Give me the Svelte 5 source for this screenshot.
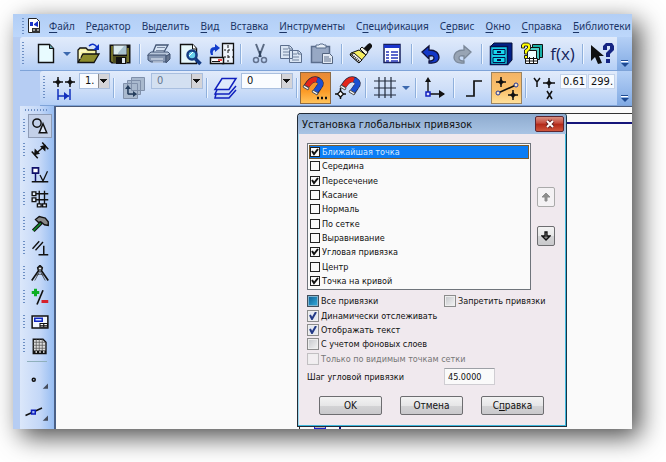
<script lang="ts">
  type Tool = { icon?: string; label?: string; kind?: string };

  const menu = [
    ['', 'Ф', 'айл'], ['', 'Р', 'едактор'], ['В', 'ы', 'делить'], ['', 'В', 'ид'],
    ['Вст', 'а', 'вка'], ['', 'И', 'нструменты'], ['С', 'п', 'ецификация'], ['С', 'е', 'рвис'],
    ['', 'О', 'кно'], ['', 'С', 'правка'], ['', 'Б', 'иблиотеки'],
  ];

  // Icon bodies, all on a 24x24 grid
  const icons: Record<string, string> = {
    new: `<path d="M4.5 2.5h11l4 4v14h-15z" fill="#e8fbff" stroke="#111" stroke-width="1.4"/><path d="M15.5 2.5v4h4" fill="#5fa0a8" stroke="#111"/>`,
    open: `<path d="M1 20V8l2-2h6l2 2h8v4" fill="#f4f0a0" stroke="#111" stroke-width="1.3"/><path d="M1 20.500 6 12h16l-5 8.500z" fill="#8d8c2d" stroke="#111" stroke-width="1.300"/><path d="M3 17V9h6" fill="none" stroke="#fffde0"/><path d="M12 4q4-4 8 1" fill="none" stroke="#0b2fc5" stroke-width="1.500"/><path d="M22 2v6h-6z" fill="#0b2fc5"/>`,
    save: `<path d="M1.500 2.500h21v19h-19l-2-2z" fill="#111"/><path d="M3 4h2v16H4l-1-1zM19 6h2v14h-2z" fill="#72712b"/><path d="M5.500 3.500h13v9h-13z" fill="#dcecf0"/><path d="m10 11 6-7h2v8h-8z" fill="#a7c1ce"/><path d="M5 14h14v7H5z" fill="#4f4e20"/><path d="M8 15h10v7H8z" fill="#111"/><path d="M14 16h3v5h-3z" fill="#dfe7ed"/>`,
    print: `<path d="M6 10 9 3h12l-4 7" fill="#d7e4f4" stroke="#435574" stroke-width="1.300"/><path d="M10 5.500h8m-9 3h8" stroke="#7c8ba5"/><path d="M1 12.500 4 10h17l2 2-3 2H1z" fill="#b7c5da" stroke="#435574"/><path d="M1 13h18v7H4l-3-2z" fill="#8797b2" stroke="#435574"/><path d="m19 14 4-2v5l-4 4z" fill="#66748d" stroke="#435574"/><path d="M4 17h12M6 20h10" stroke="#e9f0fb"/>`,
    preview: `<path d="M2.500 2.500h12l4 4v15h-16z" fill="#e6f7fa" stroke="#111" stroke-width="1.400"/><path d="M14.500 2v5h4" fill="#fff" stroke="#111"/><circle cx="14" cy="13" r="4.500" fill="#69d1eb" stroke="#173d83" stroke-width="2.500"/><path d="m17.500 17 5 5" stroke="#123881" stroke-width="3.500"/><path d="m11 14 4-4" stroke="#fff"/>`,
    exchange: `<path d="M13.500 1.500h11v20h-11z" fill="#eef4fc" stroke="#111" stroke-width="1.300"/><path d="M19 3v17" stroke="#111" stroke-dasharray="3 2"/><path d="M15 8h9m-9 7h9" stroke="#111" stroke-dasharray="2 2"/><path d="M1.500 15.500h13v6h-13z" fill="#fff" stroke="#111" stroke-width="1.500"/><path d="M3 19.500h8" stroke="#111"/><path d="M9 18h4" stroke="#e11" stroke-width="1.500"/><path d="M2 13q-3-8 4-8V2l5 4-5 4V8q-3 0-2 5z" fill="#123dcc"/>`,
    cut: `<path d="m8 2 5 13m3-13-5 13" stroke="#5b6b83" stroke-width="2"/><circle cx="8" cy="18" r="2.500" fill="none" stroke="#62728f" stroke-width="1.500"/><circle cx="16" cy="18" r="2.500" fill="none" stroke="#62728f" stroke-width="1.500"/><path d="M12 9v6" stroke="#30445f" stroke-width="2"/>`,
    copy: `<path d="M1.500 3.500h9l3 3v10h-12zM10.500 8.500h9l3 3v9h-12z" fill="#dae5f3" stroke="#5b6e8d"/><path d="M4 7h5m-5 3h6m-6 3h6m3-1h5m-5 3h7m-7 3h7" stroke="#71839f"/><path d="M10 4v3h3m6 2v3h3" fill="none" stroke="#5b6e8d"/>`,
    paste: `<path d="M1.500 4.500h18v16h-18z" fill="#97a8c4" stroke="#5b6e8d" stroke-width="1.500"/><path d="M6 6V3h3l1-1h3l1 1h2v3z" fill="#e5edf6" stroke="#5b6e8d"/><path d="M12.500 11.500h7l3 3v7h-10z" fill="#e3eaf4" stroke="#53647f"/><path d="M14 15h5m-5 2h7m-7 2h7" stroke="#60728f"/>`,
    brush: `<path d="m14 7 5-5 2-1 2 2v2l-5 6z" fill="#111"/><path d="m11 7 2-2 6 5-2 3z" fill="#f4f4e2" stroke="#111"/><path d="M10 8 2 11l-1 2 9 8 7-8z" fill="#f6ee5e" stroke="#111"/><path d="m1 13 9 8 3-3-8-7z" fill="#eee" stroke="#111"/><path d="m3 13 8 7" stroke="#111" stroke-width="2" stroke-dasharray="1 1"/>`,
    spec: `<path d="M4 2.500h16v18H4z" fill="#fff" stroke="#17205e" stroke-width="1.500"/><path d="M4 3h16v3H4z" fill="#1b35cc"/><path d="M6 10h3m-3 3h3m-3 3h3m-3 3h3m2-9h7m-7 3h7m-7 3h7m-7 3h7" stroke="#2937ba" stroke-width="1.500"/>`,
    undo: `<path d="m3 10 7-6v4q10 0 10 8-1 6-10 5v-2q5 0 5-3t-5-2v3z" fill="#1238c8" stroke="#10123a" stroke-width="1.300"/>`,
    redo: `<path d="m21 10-7-6v4Q4 8 4 16q1 6 10 5v-2q-5 0-5-3t5-2v3z" fill="#98a4b4" stroke="#7a8798" stroke-width="1.300"/>`,
    cabinet: `<path d="M1.500 4.500 5 1h18v17l-4 4.500z" fill="#002087" stroke="#071038"/><path d="M1.500 4.500h17v18h-17z" fill="#19cce5" stroke="#06104b" stroke-width="1.500"/><path d="M4 7.500h12v5H4zm0 8h12v5H4z" fill="#17d8ed" stroke="#05104b"/><path d="M8 10h4m-4 8h4" stroke="#05104b" stroke-width="2"/>`,
    libhelp: `<path d="M12.500 2.500h10v13h-10z" fill="#19b0a7" stroke="#111"/><path d="M9.500 5.500h10v12h-10z" fill="#4fd0c8" stroke="#111"/><path d="M7.500 8.500h9v9h-9z" fill="#eff" stroke="#111"/><path d="M5.500 16.500h12v5h-12zM9.500 15v6m4-6v6m-8-2h12" fill="#fff" stroke="#111"/><path d="M1.500 6V3l2-2h5l2 2v4l-3 3v2h-3V8l3-2V4h-3v2zM4.500 13.500h3v3h-3z" fill="#ff0" stroke="#222"/>`,
    cursor: `<path d="M1 3v16l4-4 3 7 4-1-3-7h5z" fill="#111"/><path d="M13 8V4l3-3h6l2 3v4l-4 4v3h-4v-4l4-4V4h-3v4zM16 17h4v4h-4z" fill="#152483"/>`,
    step: `<path d="M1 6h10M6 1v10m7-5h10M18 1v10" stroke="#111" stroke-width="1.500"/><path d="m6 3 3 3-3 3-3-3zm12 0 3 3-3 3-3-3z" fill="#111"/><path d="M6 13v11m12-11v11M6 20h11" stroke="#1230bd" stroke-width="1.500"/><path d="m12 16 5 4-5 4z" fill="#1230bd"/>`,
    sheets: `<path d="M9.500 1.500h13v13h-13zM5.500 4.500h13v14h-13zM1.500 7.500h14v15h-14z" fill="#a9b9ce" stroke="#8090aa"/><path d="M6 18v-6m0 6h6" stroke="#253d5c" stroke-width="1.500"/><path d="m3 13 3-4 3 4zm8 2 4 3-4 3z" fill="#253d5c"/>`,
    layers: `<path d="m2 18-1 4h14l7-8m-19 0-2 4h14l7-8" fill="none" stroke="#1020bd" stroke-width="1.500"/><path d="M8 2.500h14l-7 11H1z" fill="#dfeafc" stroke="#1020bd" stroke-width="1.500"/>`,
    magnet: `<g fill="none" stroke-width="6"><path d="M2 11Q8 1 14 4q5 3 1 7l-4 6" stroke="#26263f"/><path d="M3 10Q8 2 13 4" stroke="#e3261a" stroke-width="5"/><path d="M13 4q6 2 2 7l-4 5" stroke="#1b4fd0" stroke-width="5"/></g><path d="m0 9 5 3-1 2-5-3zm9 5 5 3-1 2-5-3z" fill="#eee" stroke="#555"/>`,
    dots: `<path d="M13 22h2m2 0h2m2 0h2" stroke="#111" stroke-width="2.500"/>`,
    pointmark: `<path d="M0 18h11M5.500 12v11" stroke="#111" stroke-width="1.500"/><path d="m5.500 15 3 3-3 3-3-3z" fill="#fff" stroke="#111" stroke-width="1.300"/>`,
    grid: `<path d="M1 5h22M1 12h22M1 19h22M6 1v21m6-21v21m6-21v21" stroke="#222b3d" stroke-width="1.200"/>`,
    axes: `<path d="M5 18V4m0 14h16" stroke="#111" stroke-width="1.400"/><path d="m2 6 3-5 3 5zm14 8 6 4-6 4z" fill="#111"/><path d="M3 16h4v4H3z" fill="#ddf" stroke="#1020c0" stroke-width="1.500"/>`,
    ortho: `<path d="M4 20h8V5h8" fill="none" stroke="#111" stroke-width="1.700"/>`,
    snap: `<path d="m3 17 18-8" stroke="#111" stroke-width="1.500"/><path d="M1 6h10M6 1v10m7 8h10m-5-5v10" stroke="#111" stroke-width="1.500"/><path d="m6 3 3 3-3 3-3-3zm12 13 3 3-3 3-3-3z" fill="#111"/><circle cx="3" cy="17" r="2" fill="#ffe7bc" stroke="#21369c"/><circle cx="21" cy="9" r="2" fill="#ffe7bc" stroke="#21369c"/>`,
    xy: `<path d="m1 2 3 4 3-4M4 6v5M10 7h12M16 2v10M14 15l5 8m0-8-5 8" fill="none" stroke="#111" stroke-width="1.500"/><path d="m16 4 3 3-3 3-3-3z" fill="#111"/>`,
    geometry: `<circle cx="8" cy="8" r="5.500" fill="none" stroke="#111" stroke-width="2"/><path d="m16 9 5 12H11z" fill="#dce7f8" stroke="#111" stroke-width="2"/>`,
    dimension: `<path d="m5 18 14-12" stroke="#111" stroke-width="2"/><path d="m4 19 1-9 7 7zM20 5l-1 9-7-7z" fill="#111"/><path d="m1 14 8 9m6-21 8 9" stroke="#111" stroke-width="2"/>`,
    symbols: `<path d="M2 2.500h8v7H2z" fill="#fff" stroke="#10106a" stroke-width="2.200"/><path d="M6 10v11" stroke="#10106a" stroke-width="2"/><path d="M1 21h22" stroke="#111" stroke-width="2"/><path d="m12 12 4 8 6-13" fill="none" stroke="#111" stroke-width="1.700"/>`,
    construct: `<path d="M6 5h17M6 13h17M11 1v18m7-18v18" stroke="#111" stroke-width="1.800"/><path d="M1.500 2.500h5v5h-5zm0 8h5v5h-5zm7 8h5v4h-5zm7 0h5v4h-5z" fill="#e5eef9" stroke="#111" stroke-width="1.800"/>`,
    hammer: `<path d="M14 10 3 21" stroke="#111" stroke-width="5"/><path d="M13 11 3 21" stroke="#12962c" stroke-width="2"/><path d="m6 6 5-4 8 2 4 5v5l-5-1-5-4-3 1z" fill="#888" stroke="#111" stroke-width="1.800"/>`,
    parallel: `<path d="M2 13 11 3M6 15l10-11" stroke="#111" stroke-width="1.800"/><path d="M17 9v12m-7 0h13" stroke="#111" stroke-width="2"/>`,
    compass: `<path d="m12 2 3 3-1 4 9 13M12 2 9 5l1 4L1 22" fill="none" stroke="#111" stroke-width="2.200"/><path d="m12 9 7 13M12 9 5 22M6 15q6-3 12 0" fill="none" stroke="#333"/><circle cx="12" cy="6" r="2" fill="#eee" stroke="#111"/>`,
    edit: `<path d="M6 1v10M1 6h10" stroke="#0cae24" stroke-width="4"/><path d="M16 3 8 22" stroke="#111" stroke-width="2.200"/><path d="M14 18h9" stroke="#d6202c" stroke-width="4"/>`,
    view: `<path d="M1.500 4h21v16h-21z" fill="#f1f6ff" stroke="#111" stroke-width="2"/><path d="M5 7h10v4H5z" fill="#d5e5ff" stroke="#1127c2" stroke-width="2"/><path d="M12 14h10v5H12zM12 17h10m-5-3v5" fill="#fff" stroke="#111" stroke-width="1.500"/>`,
    table: `<path d="M3 3h13l4 4v15H3z" fill="#ddd" stroke="#111" stroke-width="1.800"/><path d="M3 7h16M3 11h16M3 15h16M7 3v16m4-16v16m4-16v16" stroke="#555"/><path d="M3 18h17v4H3z" fill="#111"/><path d="M6 20h2m3 0h2m3 0h2" stroke="#fff" stroke-width="2"/>`,
    point: `<circle cx="5" cy="9" r="2" fill="#b7cce9" stroke="#111" stroke-width="2"/><path d="M24 14v7h-7z" fill="#454c5c"/>`,
    segment: `<path d="m-6 14 22-10" stroke="#111" stroke-width="2"/><path d="M2 7h5v5H2z" fill="#9fb6f4" stroke="#0c1db9" stroke-width="2"/><path d="M24 14v7h-7z" fill="#454c5c"/>`,
  };
  icons.magnetdots = icons.magnet + icons.dots;
  icons.magnetpoint = `<g transform="translate(6 0)">${icons.magnet}</g>` + icons.pointmark;

  const standard: Tool[] = [
    { icon: 'new', label: 'Создать' }, { kind: 'drop', label: 'Варианты создания' },
    { icon: 'open', label: 'Открыть' }, { icon: 'save', label: 'Сохранить' }, { kind: 'sep' },
    { icon: 'print', label: 'Печать' }, { icon: 'preview', label: 'Просмотр' }, { icon: 'exchange', label: 'Обмен' }, { kind: 'sep' },
    { icon: 'cut', label: 'Вырезать' }, { icon: 'copy', label: 'Копировать' }, { icon: 'paste', label: 'Вставить' }, { kind: 'sep' },
    { icon: 'brush', label: 'Копировать свойства' }, { icon: 'spec', label: 'Свойства' }, { kind: 'sep' },
    { icon: 'undo', label: 'Отменить' }, { icon: 'redo', label: 'Повторить' }, { kind: 'sep' },
    { icon: 'cabinet', label: 'Менеджер библиотек' }, { icon: 'libhelp', label: 'Менеджер документа' }, { kind: 'fx', label: 'Переменные' }, { kind: 'sep' },
    { icon: 'cursor', label: 'Что это такое?' },
  ];

  const side = [
    ['geometry', 'Геометрия'], ['dimension', 'Размеры'], ['symbols', 'Обозначения'], ['construct', 'Построения'],
    ['hammer', 'Редактирование'], ['parallel', 'Параметризация'], ['compass', 'Измерения'], ['edit', 'Выделение'],
    ['view', 'Виды'], ['table', 'Спецификация'],
  ];

  let snaps = $state([
    { name: 'Ближайшая точка', on: true }, { name: 'Середина', on: false },
    { name: 'Пересечение', on: true }, { name: 'Касание', on: false },
    { name: 'Нормаль', on: false }, { name: 'По сетке', on: false },
    { name: 'Выравнивание', on: false }, { name: 'Угловая привязка', on: true },
    { name: 'Центр', on: false }, { name: 'Точка на кривой', on: true },
  ]);
  let selected = $state(0);
  let step = $state('45.0000');
  let dynamic = $state(true);
  let showText = $state(true);
</script>

{#snippet glyph(name: string)}
  <svg class="glyph" viewBox="0 0 24 24" aria-hidden="true">{@html icons[name]}</svg>
{/snippet}

{#snippet tool(name: string, label: string, cls = '')}
  <button class="tool {cls}" aria-label={label}>{@render glyph(name)}</button>
{/snippet}

{#snippet drop(label: string)}
  <button class="drop" aria-label={label}><i></i></button>
{/snippet}

{#snippet tail(label: string)}
  <button class="tail" aria-label={label}><span></span><i></i></button>
{/snippet}

<div class="page">
  <div class="app">
    <nav class="menu">
      <span class="grip"></span>
      <svg class="doc" viewBox="0 0 12 15" aria-hidden="true">
        <path d="M.5.500h8l3 3v11H.5z" fill="#fff" stroke="#222" />
        <path d="M2 4h3v4H2zm4 2 4-3v6L6 7z" fill="#1732c8" />
        <path d="M4 10h8v5H4z" fill="#333" /><path d="M5 12h2m2 0h2" stroke="#fff" />
      </svg>
      {#each menu as [pre, key, post]}
        <button class="menu-item">{pre}<u>{key}</u>{post}</button>
      {/each}
    </nav>

    <div class="bar standard">
      <span class="grip"></span>
      {#each standard as t}
        {#if t.kind === 'sep'}
          <span class="sep"></span>
        {:else if t.kind === 'drop'}
          {@render drop(t.label ?? '')}
        {:else if t.kind === 'fx'}
          <button class="tool fx" aria-label={t.label}>f(x)</button>
        {:else}
          {@render tool(t.icon ?? '', t.label ?? '')}
        {/if}
      {/each}
      {@render tail('Ещё кнопки')}
    </div>

    <div class="bar state">
      <span class="grip"></span>
      {@render tool('step', 'Шаг курсора')}
      <select class="combo short" aria-label="Шаг"><option>1.</option></select>
      <span class="sep"></span>
      {@render tool('sheets', 'Виды', 'wide')}
      <select class="combo" aria-label="Текущий вид" disabled><option>0</option></select>
      <span class="sep"></span>
      {@render tool('layers', 'Слои')}
      <select class="combo" aria-label="Текущий слой"><option>0</option></select>
      <span class="sep"></span>
      {@render tool('magnetdots', 'Установка глобальных привязок', 'pressed')}
      {@render tool('magnetpoint', 'Запретить привязки')}
      <span class="sep"></span>
      {@render tool('grid', 'Сетка')}
      {@render drop('Настройка сетки')}
      <span class="sep"></span>
      {@render tool('axes', 'Локальная СК')}
      <span class="sep"></span>
      {@render tool('ortho', 'Ортогональное черчение', 'wide')}
      {@render tool('snap', 'Округление', 'hot')}
      <span class="sep"></span>
      {@render tool('xy', 'Координаты')}
      <input class="coord" aria-label="X" value="0.61" />
      <input class="coord" aria-label="Y" value="299." />
      {@render tail('Ещё кнопки состояния')}
    </div>

    <div class="body">
      <aside class="side">
        <span class="side-grip"></span>
        {#each side as [name, label], i}
          <div class="side-row">
            <span class="grip"></span>
            {@render tool(name, label, i === 0 ? 'current' : '')}
          </div>
        {/each}
        <hr />
        <div class="side-extra">{@render tool('point', 'Точка')}</div>
        <div class="side-extra">{@render tool('segment', 'Отрезок')}</div>
      </aside>

      <main class="canvas">
        <div class="sheet"><div class="sheet-tab"></div><div class="sheet-frame"></div></div>

        <form class="dialog" onsubmit={(e) => e.preventDefault()}>
          <header>
            <h1>Установка глобальных привязок</h1>
            <button class="close" type="button" aria-label="Закрыть">
              <svg viewBox="0 0 12 10" aria-hidden="true">
                <path d="m3 2 6 6m0-6L3 8" stroke="#6a2222" stroke-width="4" />
                <path d="m3 2 6 6m0-6L3 8" stroke="#fff" stroke-width="2" />
              </svg>
            </button>
          </header>

          <div class="content">
            <div class="pick">
              <ul class="list">
                {#each snaps as s, i}
                  <li class:selected={selected === i}>
                    <label><input class="flat" type="checkbox" bind:checked={s.on} onfocus={() => (selected = i)} />{s.name}</label>
                  </li>
                {/each}
              </ul>
              <div class="order">
                <button type="button" disabled aria-label="Вверх">
                  <svg viewBox="0 0 10 10"><path d="M5 1 1 5h3v4h2V5h3z" fill="#8c8c8c" stroke="#8c8c8c" /></svg>
                </button>
                <button type="button" aria-label="Вниз">
                  <svg viewBox="0 0 10 10"><path d="M5 9 1 5h3V1h2v4h3z" fill="#888" stroke="#111" stroke-width="1.300" /></svg>
                </button>
              </div>
            </div>

            <div class="options">
              <div class="pair">
                <label><input class="box all" type="checkbox" />Все привязки</label>
                <label><input class="box" type="checkbox" />Запретить привязки</label>
              </div>
              <label><input class="box" type="checkbox" bind:checked={dynamic} />Динамически отслеживать</label>
              <label><input class="box" type="checkbox" bind:checked={showText} />Отображать текст</label>
              <label><input class="box" type="checkbox" />С учетом фоновых слоев</label>
              <label class="off"><input class="box" type="checkbox" disabled />Только по видимым точкам сетки</label>
            </div>

            <div class="pair step">
              <label for="step">Шаг угловой привязки</label>
              <input id="step" bind:value={step} />
            </div>

            <footer>
              <button>OK</button>
              <button type="button">Отмена</button>
              <button type="button">С<u>п</u>равка</button>
            </footer>
          </div>
        </form>
      </main>
    </div>
  </div>
</div>

<style>
  :global(body) { background: #fff; }
  * { box-sizing: border-box; }
  button, input, select { font: inherit; margin: 0; padding: 0; color: inherit; }
  button { border: 0; background: none; }

  .page {
    min-height: 100vh;
    display: flex;
    padding: 14px 34px 34px 13px;
    overflow: hidden;
    font-family: "DejaVu Sans Condensed", "DejaVu Sans", sans-serif;
    font-size: 9px;
    color: #111;
  }
  .app {
    flex: 1;
    min-width: 0;
    display: flex;
    flex-direction: column;
    background: #b6cdf3;
    box-shadow: 8px 8px 24px rgba(0, 0, 0, 0.7);
  }

  /* Меню */
  .menu {
    height: 23px;
    display: flex;
    align-items: center;
    gap: 11px;
    padding-left: 9px;
    background: linear-gradient(#b2cef5, #bdd7fb);
    font-family: "Noto Sans", sans-serif;
    font-size: 10px;
    color: #1b3566;
    white-space: nowrap;
  }
  .menu u { text-underline-offset: 2px; }
  .menu-item { line-height: 22px; }
  .menu .grip { margin-right: -7px; height: 16px; }
  .doc { width: 12px; height: 15px; flex: none; margin-right: -2px; }

  .grip {
    width: 2px;
    height: 24px;
    flex: none;
    background: repeating-linear-gradient(#6d8fc4 0 1px, transparent 1px 3px);
  }

  /* Панели */
  .bar {
    height: 34px;
    display: flex;
    align-items: center;
    margin-left: 7px;
    background: linear-gradient(#e1ebfb, #cfdff8 50%, #b4cff6);
    border-bottom: 1px solid #7ea3d8;
    border-radius: 3px 3px 0 0;
  }
  .standard { padding-left: 2px; }
  .standard .grip { margin-right: 6px; }
  .state { margin-left: 27px; padding-left: 3px; height: 35px; }
  .state .grip { margin-right: 3px; }
  .tool {
    width: 31px;
    height: 32px;
    flex: none;
    display: flex;
    align-items: center;
    justify-content: center;
  }
  .tool.wide { width: 34px; }
  .glyph { width: 24px; height: 24px; overflow: visible; fill: none; }
  .drop { width: 12px; height: 24px; flex: none; display: grid; place-items: center; }
  .drop i { border: 4px solid transparent; border-top-color: #3c69ae; border-bottom: 0; }
  .sep { width: 1px; height: 20px; margin: 0 3px; flex: none; background: #8fb0dc; box-shadow: 1px 0 #eef5ff; }
  .standard .sep { margin-left: 4px; }
  .fx { font-family: "Open Sans", sans-serif; font-size: 17px; font-weight: 500; color: #16245c; }
  .tail {
    width: 15px;
    align-self: stretch;
    margin-left: auto;
    flex: none;
    display: flex;
    flex-direction: column;
    align-items: center;
    justify-content: flex-end;
    gap: 2px;
    padding-bottom: 3px;
    background: linear-gradient(#b5d0f6, #81aae3);
  }
  .tail span { width: 7px; height: 1px; background: #1d4a93; box-shadow: 0 1px #fff; }
  .tail i { border: 4px solid transparent; border-top-color: #1d4a93; border-bottom: 0; }
  .combo {
    width: 52px;
    height: 16px;
    flex: none;
    align-self: flex-start;
    margin-top: 2px;
    padding: 0 0 0 5px;
    appearance: none;
    border: 1px solid #a9bfdf;
    border-radius: 0;
    font-size: 11px;
    line-height: 14px;
    background:
      linear-gradient(#111, #111) right 2px top 5px / 7px 1px no-repeat,
      linear-gradient(#111, #111) right 3px top 6px / 5px 1px no-repeat,
      linear-gradient(#111, #111) right 4px top 7px / 3px 1px no-repeat,
      linear-gradient(#111, #111) right 5px top 8px / 1px 1px no-repeat,
      linear-gradient(90deg, #8c8c90 1px, #d4d4d8 1px) right / 11px 100% no-repeat,
      #fafcff;
  }
  .combo:disabled { opacity: 1; color: #67778d; background-color: #d3e0f1; }
  .combo.short { width: 31px; }
  .pressed { background: linear-gradient(#e78938, #fb9a26 60%, #ffc35c); border: 1px solid #8e6a42; }
  .hot { background: linear-gradient(#f3b467, #fbc36d 60%, #ffe09a); border: 1px solid #9a8462; }
  .coord {
    width: 27px;
    height: 15px;
    flex: none;
    align-self: flex-start;
    margin: 3px 1px 0 0;
    padding-left: 2px;
    border: 1px solid #c3d3eb;
    background: #f6faff;
    font-size: 11px;
  }

  /* Левая панель */
  .body { flex: 1; display: flex; padding-left: 7px; }
  .side {
    width: 34px;
    flex: none;
    display: flex;
    flex-direction: column;
    padding-top: 3px;
    background: linear-gradient(90deg, #dbe7fa, #c3d7f7 60%, #97bdf2);
  }
  .side-grip {
    width: 22px;
    height: 2px;
    margin: 0 0 2px 5px;
    background: repeating-linear-gradient(90deg, #6d8fc4 0 1px, transparent 1px 3px);
  }
  .side-row { display: flex; align-items: center; height: 24px; padding-left: 3px; }
  .side-row:nth-child(even) { height: 25px; }
  .side-row .grip { height: 14px; margin-right: 3px; }
  .side .tool { width: 24px; height: 24px; }
  .side .glyph { width: 18px; height: 18px; }
  .current { border: 1px solid #8f9cb5; background: #c3d0e8; }
  .side hr { width: 20px; height: 1px; margin: 3px 0 3px 7px; border: 0; background: #8fb0bc; }
  .side-extra { height: 32px; padding: 5px 0 0 7px; }

  .canvas {
    flex: 1;
    min-width: 0;
    position: relative;
    background: #fafafa;
    border-left: 2px solid #4b6187;
    border-top: 1px solid #4a5a78;
    overflow: hidden;
  }
  .sheet { position: absolute; inset: 6px 0 0 243px; border-top: 1px solid #333; border-left: 1px solid #333; }
  .sheet-frame { position: absolute; inset: 8px 0 0 39px; border-top: 2px solid #15157a; border-left: 2px solid #15157a; }
  .sheet-tab { position: absolute; left: 14px; bottom: 0; width: 12px; height: 3px; border: 1px solid #22c; background: #bbb; }

  /* Диалог */
  .dialog {
    position: absolute;
    left: 241px;
    top: 6px;
    width: 270px;
    background: #f0e9ee;
    border: 1px solid #222b36;
    border-right-color: #14364a;
    border-radius: 4px 4px 0 0;
    box-shadow: inset -1px -1px #3fb8dc, inset 1px 0 #9edaf0;
  }
  header {
    height: 20px;
    display: flex;
    align-items: center;
    justify-content: space-between;
    padding: 0 2px 0 4px;
    background: linear-gradient(#8eabcf, #a9c4e4);
    border-radius: 3px 3px 0 0;
  }
  h1 { margin: 0; font-size: 11px; font-weight: 400; white-space: nowrap; }
  .close {
    width: 29px;
    height: 16px;
    display: grid;
    place-items: center;
    border: 1px solid #5e2630;
    border-radius: 2px;
    background: linear-gradient(#d99182, #c4483a 45%, #b02718 50%, #d0553c);
  }
  .close svg { width: 12px; height: 10px; }
  .content { padding: 9px 11px 11px 9px; }
  .pick { display: flex; gap: 6px; }
  .list {
    width: 225px;
    height: 147px;
    margin: 0;
    padding: 1px;
    list-style: none;
    display: grid;
    grid-auto-rows: 1fr;
    border: 1px solid #6f747b;
    background: #fafafa;
  }
  .list li { display: flex; padding-left: 1px; }
  .list label { display: flex; align-items: center; gap: 2px; }
  .list .selected { background: #0a7cf5; color: #d8eaff; box-shadow: inset 0 0 0 1px #7a5a2e; }
  input[type='checkbox'] { appearance: none; flex: none; background: #fafafa center no-repeat; }
  .flat { width: 10px; height: 10px; border: 1px solid #222; }
  .flat:checked { background-image: url("data:image/svg+xml,%3Csvg xmlns='http://www.w3.org/2000/svg' width='8' height='8'%3E%3Cpath d='m1 3 2 3 4-5' fill='none' stroke='%23111' stroke-width='2'/%3E%3C/svg%3E"); }
  .box { width: 12px; height: 12px; border: 1px solid #8c8c8c; box-shadow: inset 0 0 0 1px #eee; }
  .box:not(:checked) { background: linear-gradient(135deg, #c4c6ca, #f4f4f4); }
  .box:checked { background-image: url("data:image/svg+xml,%3Csvg xmlns='http://www.w3.org/2000/svg' width='10' height='10'%3E%3Cpath d='m2 4 2 4 4-7' fill='none' stroke='%23243a86' stroke-width='2'/%3E%3C/svg%3E"); background-color: #e4e8f0; }
  .box.all:not(:checked) { border-color: #444f5c; box-shadow: inset 0 0 0 1px #7fb3cf; background: linear-gradient(135deg, #0d5a90, #35b0e0); }
  .box:disabled:not(:checked) { border-color: #c2bfc2; background: #f2eef1; }
  .off { color: #777; }

  .order { flex: 1; display: flex; flex-direction: column; align-items: center; gap: 19px; padding-top: 44px; }
  .order button, footer button {
    border: 1px solid #6d6d70;
    border-radius: 2px;
    background: linear-gradient(#f3f3f3, #e6e6e7 50%, #d3d3d5 52%, #c9c9cc);
  }
  .order button { width: 18px; height: 20px; display: grid; place-items: center; }
  .order button:disabled { border-color: #aaa; background: #f4f2f4; }
  .order svg { width: 10px; height: 10px; }

  .options { display: grid; grid-auto-rows: 1fr; height: 72px; margin-top: 4px; }
  .options label { display: flex; align-items: center; gap: 2px; white-space: nowrap; }
  .pair { display: grid; grid-template-columns: 137px 1fr; align-items: center; }
  .step { margin-top: 2px; }
  .step input { width: 51px; height: 17px; padding-left: 3px; border: 1px solid #cfcdd2; border-top-color: #9da0a6; background: #fafafa; }
  footer { display: flex; gap: 18px; padding: 11px 0 0 12px; }
  footer button { width: 63px; height: 19px; font-size: 10px; line-height: 16px; }
</style>
